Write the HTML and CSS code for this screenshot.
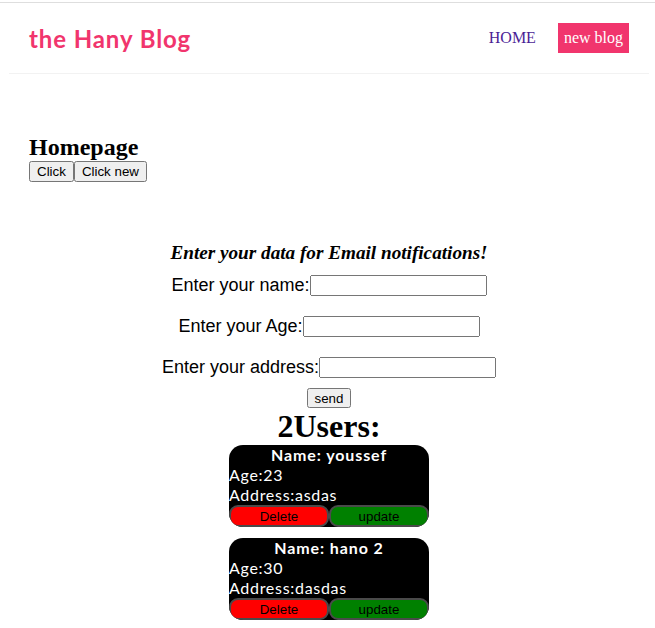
FILE: index.html
```html
<!DOCTYPE html>
<html>
<head>
<meta charset="utf-8">
<title>the Hany Blog</title>
<link rel="stylesheet" href="styles.css">
</head>
<body>
<div class="app">
  <nav class="navbar">
    <h1 class="brand">the Hany Blog</h1>
    <div class="links">
      <a href="#" class="home-link">HOME</a>
      <a href="#" class="new-link">new blog</a>
    </div>
  </nav>
  <div class="content">
    <h2 class="page-title">Homepage</h2>
    <button class="btn">Click</button><button class="btn">Click new</button>
  </div>
  <div class="notify">
    <h3 class="notify-title"><i>Enter your data for Email notifications!</i></h3>
    <form class="form">
      <label class="field">Enter your name:<input type="text"></label>
      <label class="field">Enter your Age:<input type="text"></label>
      <label class="field">Enter your address:<input type="text"></label>
      <button type="button" class="btn send">send</button>
    </form>
    <h1 class="users-title">2Users:</h1>
    <div class="card">
      <div class="card-name">Name: youssef</div>
      <div class="card-line">Age:23</div>
      <div class="card-line">Address:asdas</div>
      <div class="card-actions">
        <button class="act del">Delete</button><button class="act upd">update</button>
      </div>
    </div>
    <div class="card">
      <div class="card-name">Name: hano 2</div>
      <div class="card-line">Age:30</div>
      <div class="card-line">Address:dasdas</div>
      <div class="card-actions">
        <button class="act del">Delete</button><button class="act upd">update</button>
      </div>
    </div>
  </div>
</div>
</body>
</html>
```
FILE: styles.css
```css
html {
  background: #fff linear-gradient(#fff 0, #fff 2px, #dedede 2px, #dedede 3px, #fff 3px) no-repeat;
  background-size: 100% 3px;
}
body {
  margin: 0;
  padding: 3px 0 0 3px;
  font-family: "Liberation Serif", serif;
  color: #000;
}
h1, h2, h3 { margin: 0; }

.navbar {
  max-width: 600px;
  margin: 0 auto;
  padding: 20px;
  display: flex;
  align-items: center;
  border-bottom: 1px solid #f2f2f2;
}
.brand {
  font-family: "Lato", sans-serif;
  font-weight: 700;
  font-size: 24px;
  letter-spacing: 0.9px;
  color: #f1356d;
}
.links {
  margin-left: auto;
  display: flex;
  align-items: center;
}
.links a {
  margin-left: 16px;
  padding: 6px;
  text-decoration: none;
  font-size: 16px;
}
.home-link { color: #4b1e96; }
.new-link {
  color: #fff;
  background: #f1356d;
}

.content {
  max-width: 600px;
  margin: 40px auto;
  padding: 20px;
}
.page-title { font-size: 24px; }

.btn {
  font-family: "Liberation Sans", Arial, sans-serif;
  font-size: 13.333px;
}

.notify { text-align: center; }
.notify-title { font-size: 19.2px; }
.form {
  margin: 0;
  padding-top: 11px;
  display: flex;
  flex-direction: column;
  align-items: center;
  gap: 20px;
}
.field {
  display: flex;
  align-items: center;
  height: 21px;
  font-family: "Liberation Sans", Arial, sans-serif;
  font-size: 18px;
}
.field input {
  box-sizing: border-box;
  width: 177px;
  height: 21px;
  font-size: 13.333px;
}
.send {
  margin-top: -10px;
  height: 20px;
  padding: 0 6px;
}
.users-title {
  font-size: 32px;
  line-height: 37px;
}

.card {
  width: 200px;
  margin: 0 auto 11px;
  background: #000;
  border-radius: 14px;
  color: #fff;
  text-align: left;
  font-family: "Lato", sans-serif;
  font-size: 16px;
  letter-spacing: 0.7px;
  line-height: 20px;
  overflow: hidden;
}
.card-name {
  text-align: center;
  font-weight: 700;
  letter-spacing: 0.9px;
}
.card-actions { display: flex; }
.act {
  flex: 1;
  font-family: "Liberation Sans", Arial, sans-serif;
  font-size: 13.333px;
  letter-spacing: 0;
  height: 22px;
  color: #000;
  border: 2px solid #4a4a4a;
  border-radius: 9px;
  padding: 0;
}
.del { background: #ff0000; }
.upd { background: #008000; }
```
